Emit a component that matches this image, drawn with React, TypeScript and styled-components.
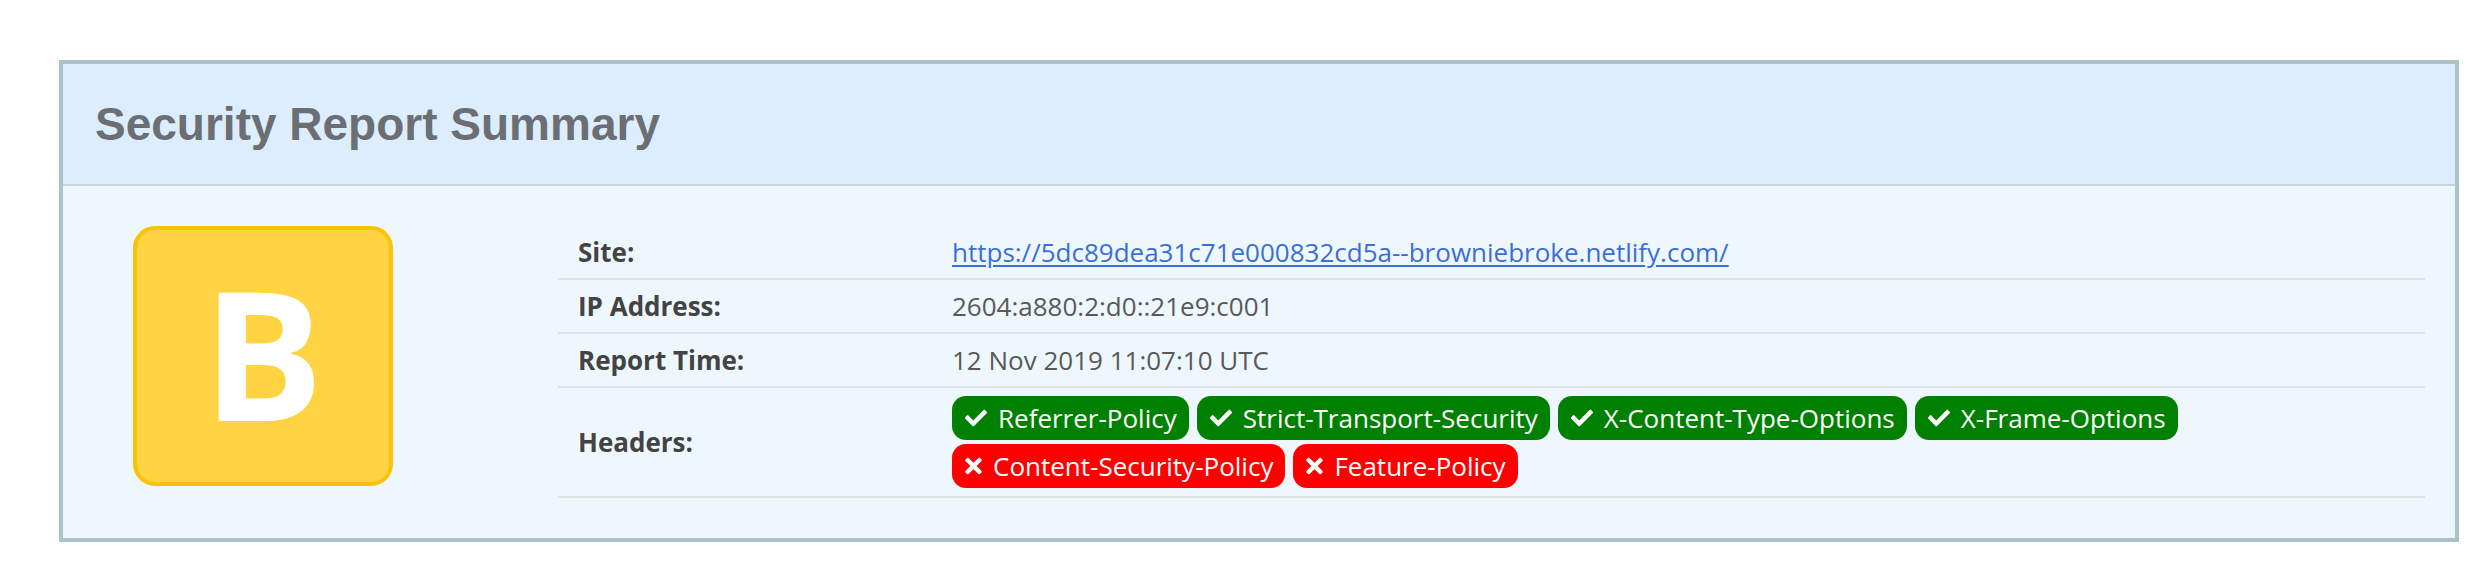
import React from 'react';
import styled, { createGlobalStyle } from 'styled-components';

const GlobalStyle = createGlobalStyle`
  body {
    margin: 0;
    background: #ffffff;
    font-family: 'Open Sans', 'Noto Sans', sans-serif;
  }
`;

const Page = styled.div`
  padding: 60px 0 0 59px;
`;

const Card = styled.section`
  width: 2400px;
  box-sizing: border-box;
  border: 4px solid #a9c3c7;
  background: #eff7fe;
`;

const CardHeader = styled.header`
  height: 120px;
  display: flex;
  align-items: center;
  padding-left: 32px;
  background: #dcedfd;
  border-bottom: 2px solid #c6d6da;
`;

const Title = styled.h1`
  margin: 0;
  font-family: 'Liberation Sans', Arial, sans-serif;
  font-weight: 700;
  font-size: 46px;
  color: #6b6e73;
`;

const CardBody = styled.div`
  display: flex;
  align-items: flex-start;
  padding: 40px 30px 40px 30px;
`;

const GradeColumn = styled.div`
  width: 340px;
  display: flex;
  justify-content: center;
  flex-shrink: 0;
`;

const Grade = styled.div`
  width: 260px;
  height: 260px;
  box-sizing: border-box;
  border: 4px solid #fcc10a;
  border-radius: 22px;
  background: #ffd342;
  display: flex;
  align-items: center;
  justify-content: center;
  color: #ffffff;
  font-family: 'Open Sans', sans-serif;
  font-weight: 700;
  font-size: 180px;
  line-height: 1;
  padding-bottom: 8px;
`;

const Table = styled.div`
  flex: 1;
  margin-left: 125px;
  display: grid;
  grid-template-columns: 374px 1fr;
  font-size: 26px;
`;

const Label = styled.div`
  padding: 7px 20px;
  line-height: 38px;
  font-weight: 700;
  color: #434343;
  border-bottom: 2px solid #e0e2e4;
  display: flex;
  align-items: center;
`;

const Value = styled.div<{ $tall?: boolean }>`
  padding: ${(p) => (p.$tall ? '8px 20px' : '7px 20px')};
  line-height: 38px;
  color: #595959;
  border-bottom: 2px solid #e0e2e4;
  display: flex;
  align-items: center;
`;

const SiteLink = styled.a`
  color: #3a6fd8;
  text-decoration: underline;
  text-underline-offset: 3px;
`;

const Badges = styled.div`
  display: flex;
  flex-wrap: wrap;
  gap: 4px 8px;
`;

const Badge = styled.span<{ $ok: boolean }>`
  display: inline-flex;
  align-items: center;
  gap: 11px;
  height: 44px;
  padding: 0 12px 0 13px;
  box-sizing: border-box;
  border-radius: 14px;
  background: ${(p) => (p.$ok ? '#008000' : '#ff0000')};
  color: #ffffff;
  font-size: 26px;
  white-space: nowrap;
`;

const CheckIcon = () => (
  <svg width="22" height="22" viewBox="0 0 512 512" fill="currentColor">
    <path d="M173.898 439.404l-166.4-166.4c-9.997-9.997-9.997-26.206 0-36.204l36.203-36.204c9.997-9.998 26.207-9.998 36.204 0L192 312.69 432.095 72.596c9.997-9.997 26.207-9.997 36.204 0l36.203 36.204c9.997 9.997 9.997 26.206 0 36.204l-294.4 294.401c-9.998 9.997-26.207 9.997-36.204-.001z" />
  </svg>
);

const TimesIcon = () => (
  <svg width="17" height="24" viewBox="0 0 352 512" fill="currentColor">
    <path d="M242.72 256l100.07-100.07c12.28-12.28 12.28-32.19 0-44.48l-22.24-22.24c-12.28-12.28-32.19-12.28-44.48 0L176 189.28 75.930 89.21c-12.28-12.28-32.19-12.28-44.48 0L9.21 111.45c-12.28 12.28-12.28 32.19 0 44.48L109.28 256 9.21 356.07c-12.28 12.28-12.28 32.19 0 44.48l22.24 22.24c12.28 12.28 32.2 12.28 44.48 0L176 322.72l100.07 100.07c12.28 12.28 32.2 12.28 44.48 0l22.24-22.240c12.28-12.28 12.28-32.19 0-44.48L242.72 256z" />
  </svg>
);

const headers = [
  { name: 'Referrer-Policy', ok: true },
  { name: 'Strict-Transport-Security', ok: true },
  { name: 'X-Content-Type-Options', ok: true },
  { name: 'X-Frame-Options', ok: true },
  { name: 'Content-Security-Policy', ok: false },
  { name: 'Feature-Policy', ok: false },
];

const site = 'https://5dc89dea31c71e000832cd5a--browniebroke.netlify.com/';

export default function App() {
  return (
    <Page>
      <GlobalStyle />
      <Card>
        <CardHeader>
          <Title>Security Report Summary</Title>
        </CardHeader>
        <CardBody>
          <GradeColumn>
            <Grade>B</Grade>
          </GradeColumn>
          <Table>
            <Label>Site:</Label>
            <Value>
              <SiteLink href={site}>{site}</SiteLink>
            </Value>
            <Label>IP Address:</Label>
            <Value>2604:a880:2:d0::21e9:c001</Value>
            <Label>Report Time:</Label>
            <Value>12 Nov 2019 11:07:10 UTC</Value>
            <Label>Headers:</Label>
            <Value $tall>
              <Badges>
                {headers.map((h) => (
                  <Badge key={h.name} $ok={h.ok}>
                    {h.ok ? <CheckIcon /> : <TimesIcon />}
                    {h.name}
                  </Badge>
                ))}
              </Badges>
            </Value>
          </Table>
        </CardBody>
      </Card>
    </Page>
  );
}
